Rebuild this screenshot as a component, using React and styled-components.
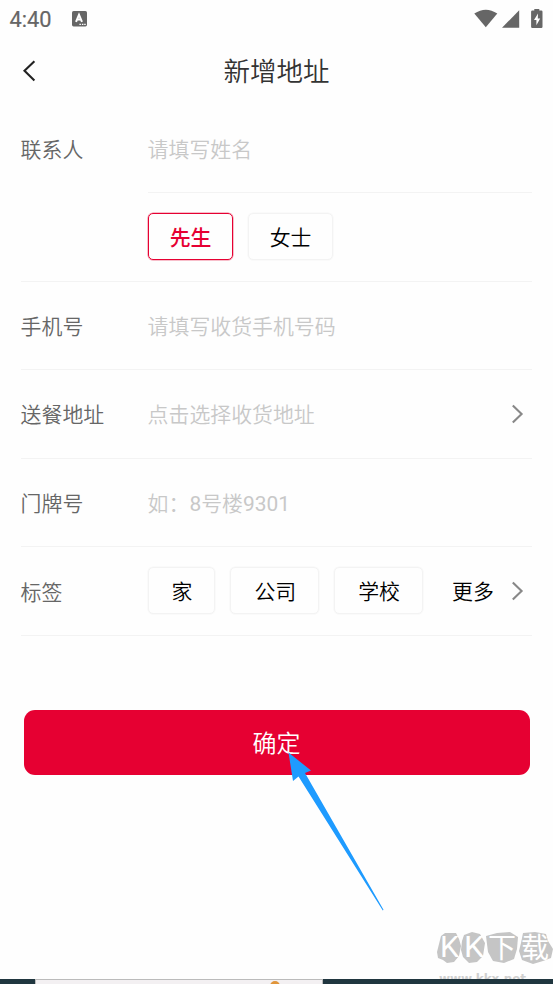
import styled, { createGlobalStyle } from 'styled-components';

const tags = [
  { name: '家', width: 67.8 },
  { name: '公司', width: 88.8 },
  { name: '学校', width: 88.8 },
];

const App = () => {
  return (
    <Screen>
      <GlobalStyle />
      <StatusBar>
        <Clock>4:40</Clock>
        <InputIcon />
        <StatusIcons />
      </StatusBar>

      <Header>
        <BackIcon />
        <Title>新增地址</Title>
      </Header>

      <Form>
        <Row $noLine>
          <Label>联系人</Label>
          <Field $line>
            <Placeholder>请填写姓名</Placeholder>
          </Field>
        </Row>
        <Row>
          <Label />
          <Field>
            <Chip $width={85} $active>先生</Chip>
            <Chip $width={85}>女士</Chip>
          </Field>
        </Row>
        <Row>
          <Label>手机号</Label>
          <Field>
            <Placeholder>请填写收货手机号码</Placeholder>
          </Field>
        </Row>
        <Row>
          <Label>送餐地址</Label>
          <Field>
            <Placeholder>点击选择收货地址</Placeholder>
            <ArrowIcon />
          </Field>
        </Row>
        <Row>
          <Label>门牌号</Label>
          <Field>
            <Placeholder>
              如：<Digits>8</Digits>号楼<Digits>9301</Digits>
            </Placeholder>
          </Field>
        </Row>
        <Row>
          <Label>标签</Label>
          <Field>
            {tags.map((tag) => (
              <Chip key={tag.name} $width={tag.width}>{tag.name}</Chip>
            ))}
            <More>更多</More>
            <ArrowIcon />
          </Field>
        </Row>
      </Form>

      <SubmitButton>确定</SubmitButton>

      <Pointer />
      <Watermark />
      <BottomStrip>
        <StripPanel>
          <StripDot />
        </StripPanel>
      </BottomStrip>
    </Screen>
  );
};

// Icons
const InputIcon = () => (
  <svg width="15" height="16" viewBox="0 0 15 16">
    <rect width="15" height="15.4" rx="1.6" fill="#666" />
    <path d="M4 10.8 L7 3.8 L10 10.8 M5.2 8.6 H8.8" fill="none" stroke="#fff" strokeWidth="2" />
    <path d="M7.4 13.4h1.5M9.9 13.4h1.5M12.2 13.4h1.5" stroke="#fff" strokeWidth="1.3" />
  </svg>
);

const StatusIcons = () => (
  <StatusSvg width="70" height="20" viewBox="0 0 70 20">
    <path d="M0.3 4.6 Q11.8 -3.2 23.3 4.6 L11.8 18.2 Z" fill="#666" />
    <path d="M45.2 1.2 V18.8 H28 Z" fill="#666" />
    <path d="M60.3 0h5v1.5h2a1.2 1.2 0 0 1 1.2 1.2v15a1.2 1.2 0 0 1-1.2 1.2h-9a1.2 1.2 0 0 1-1.2-1.2v-15a1.2 1.2 0 0 1 1.2-1.2h2z" fill="#666" />
    <path d="M64 4.4 L60 11 H62.4 V16.3 L66.2 9.4 H63.8 Z" fill="#fff" />
  </StatusSvg>
);

const BackIcon = () => (
  <svg width="15" height="22" viewBox="0 0 15 22">
    <path d="M13.4 1.2 L3.5 10.8 L13.4 20.4" fill="none" stroke="#222" strokeWidth="2.1" />
  </svg>
);

const ArrowIcon = () => (
  <ArrowSvg width="13" height="22" viewBox="0 0 13 22">
    <path d="M1.8 2.4 L10.6 11 L1.8 19.6" fill="none" stroke="#888" strokeWidth="2.1" />
  </ArrowSvg>
);

const Pointer = () => (
  <PointerSvg width="96" height="160" viewBox="0 0 96 160">
    <path d="M0.5 1.5 L23 19.5 L17 22 L95.5 158.8 L94.8 159.4 L10.5 25.5 L5 30 Z" fill="#1e9bff" />
  </PointerSvg>
);

const Watermark = () => (
  <WatermarkSvg width="116" height="54" viewBox="0 0 116 54">
    <g fill="#c5c5c5">
      <path d="M4 6 L8 3 L19 3 L22 9 L24 16 L22 26 L17 32 L10 33 L6 30 L1 28 L0 22 L2 14 Z" />
      <path d="M27 5 L35 2 L43 4 L48 13 L46 26 L40 32 L32 33 L26 27 L24 20 L25 11 Z" />
      <path d="M49 6 L60 3 L73 2 L81 7 L80 19 L77 29 L67 33 L56 31 L51 22 Z" />
      <path d="M86 3 L98 2 L109 4 L111 11 L116 19 L114 28 L106 31 L96 34 L85 30 L82 21 L84 13 Z" />
    </g>
    <WatermarkText x="3" y="27" fontSize="30" textLength="19" lengthAdjust="spacingAndGlyphs">K</WatermarkText>
    <WatermarkText x="27" y="27" fontSize="30" textLength="20" lengthAdjust="spacingAndGlyphs">K</WatermarkText>
    <WatermarkText x="51" y="27.5" fontSize="28">下</WatermarkText>
    <WatermarkText x="84" y="27.5" fontSize="28">载</WatermarkText>
    <WatermarkUrl x="2" y="52.5" textLength="87">www.kkx.net</WatermarkUrl>
  </WatermarkSvg>
);

// Styled Components
const GlobalStyle = createGlobalStyle`
  body {
    margin: 0;
    background: #fefefe;
    font-family: Roboto, 'Noto Sans CJK SC', sans-serif;
    font-weight: 350;
  }
`;

const Screen = styled.div`
  position: relative;
  display: flex;
  flex-direction: column;
  width: 553px;
  height: 984px;
  overflow: hidden;
  background: #fefefe;
`;

const StatusBar = styled.div`
  display: flex;
  align-items: center;
  box-sizing: border-box;
  height: 38px;
  padding: 0 9px 0 9.5px;
`;

const Clock = styled.span`
  width: 62.5px;
  color: #666;
  font-size: 21.8px;
  font-weight: 400;
  -webkit-text-stroke: 0.2px #666;
`;

const StatusSvg = styled.svg`
  margin-left: auto;
`;

const Header = styled.div`
  display: flex;
  align-items: center;
  height: 66.4px;
  padding: 0 21px;
`;

const Title = styled.h1`
  flex: 1;
  margin: 1px 15px 0 0;
  color: #333;
  font-size: 26.5px;
  font-weight: 350;
  line-height: 38px;
  text-align: center;
`;

const Form = styled.div`
  padding: 0 21px 0 20.6px;
`;

const Row = styled.div`
  display: flex;
  box-sizing: border-box;
  height: 88.6px;
  border-bottom: 1px solid ${({ $noLine }) => ($noLine ? 'transparent' : '#f3f3f3')};
`;

const Label = styled.div`
  display: flex;
  align-items: center;
  flex: 0 0 127px;
  padding-bottom: 1.2px;
  color: #666;
  font-size: 20.9px;
`;

const Field = styled.div`
  display: flex;
  align-items: center;
  flex: 1;
  gap: 15px;
  margin-bottom: ${({ $line }) => ($line ? '-1px' : 0)};
  padding-bottom: 0.6px;
  border-bottom: ${({ $line }) => ($line ? '1px solid #f3f3f3' : 'none')};
`;

const Placeholder = styled.span`
  padding-bottom: 0.7px;
  color: #c8c8c8;
  font-size: 20.9px;
`;

const Digits = styled.span`
  font-weight: 400;
`;

const Chip = styled.div`
  display: flex;
  align-items: center;
  justify-content: center;
  box-sizing: border-box;
  width: ${({ $width }) => $width}px;
  height: 47px;
  padding: 0 0 1px 1px;
  border: 1px solid ${({ $active }) => ($active ? '#e60032' : '#f3f3f3')};
  border-radius: 5px;
  box-shadow: 0 0 0 0.5px ${({ $active }) => ($active ? 'rgba(230, 0, 50, 0.5)' : '#f6f6f6')};
  color: ${({ $active }) => ($active ? '#e60032' : '#000')};
  font-size: 20.9px;
  font-weight: ${({ $active }) => ($active ? 500 : 350)};
`;

const More = styled.span`
  margin-left: 14px;
  padding-bottom: 1px;
  color: #000;
  font-size: 20.9px;
`;

const ArrowSvg = styled.svg`
  margin-left: auto;
  margin-right: 8px;
`;

const SubmitButton = styled.div`
  display: flex;
  align-items: center;
  justify-content: center;
  box-sizing: border-box;
  height: 65px;
  margin: 74px 23.5px 0;
  padding-bottom: 1px;
  border-radius: 11px;
  background: #e60032;
  color: #fff;
  font-size: 24px;
`;

const PointerSvg = styled.svg`
  position: absolute;
  left: 288px;
  top: 751px;
`;

const WatermarkSvg = styled.svg`
  position: absolute;
  left: 437px;
  top: 930px;
`;

const WatermarkText = styled.text`
  fill: #fff;
  font-weight: 400;
`;

const WatermarkUrl = styled.text`
  fill: #d0d0d0;
  font-family: 'DejaVu Sans', sans-serif;
  font-size: 12px;
  font-weight: 700;
`;

const BottomStrip = styled.div`
  position: relative;
  height: 5px;
  margin-top: auto;
  padding-left: 35px;
  background: #20363f;
`;

const StripPanel = styled.div`
  box-sizing: border-box;
  width: 288px;
  height: 5px;
  overflow: hidden;
  border: 1px solid #bbb;
  border-bottom: none;
  background: #f3f0f2;
`;

const StripDot = styled.div`
  width: 10px;
  height: 10px;
  margin: 1px 0 0 234px;
  border-radius: 50%;
  background: #e0953a;
`;

export default App;
